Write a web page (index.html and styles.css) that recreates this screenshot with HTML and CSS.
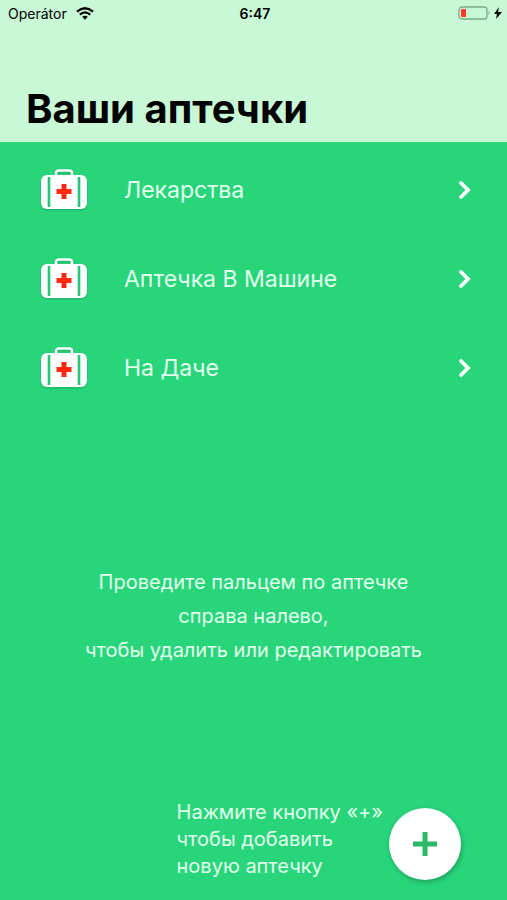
FILE: index.html
```html
<!DOCTYPE html>
<html lang="ru">
<head>
<meta charset="utf-8">
<meta name="viewport" content="width=device-width, initial-scale=1">
<title>Ваши аптечки</title>
<link rel="stylesheet" href="styles.css">
</head>
<body>
<svg class="symbols" aria-hidden="true">
  <symbol id="kit" viewBox="0 0 48 42">
    <path d="M16 7V4q0-2.500 3-2.500h10q3 0 3 2.500v3" fill="none" stroke="#fff" stroke-width="2.6"/>
    <rect x="1" y="6" width="46" height="34" rx="6" fill="#fff"/>
    <path d="M9 8v30M39 8v30" stroke="#28c775" stroke-width="2.600"/>
    <path d="M24 15v15M16.500 22.500h15" stroke="#ff2612" stroke-width="5"/>
  </symbol>
  <symbol id="chevron" viewBox="0 0 14 20">
    <path d="M3 3l7 7-7 7" fill="none" stroke="#fff" stroke-width="3.800" stroke-linecap="round"/>
  </symbol>
</svg>
<header class="header">
  <div class="status">
    <div class="carrier"><span>Operátor</span>
      <svg class="wifi" viewBox="0 0 18 13"><path d="M1 4.6q8-6.8 16 0M3.8 7.6q5.2-4.4 10.4 0" fill="none" stroke="#000" stroke-width="2.3"/><path d="M6.2 9.8q2.8-2.2 5.6 0L9 12.8z"/></svg>
    </div>
    <time class="clock">6:47</time>
    <div class="power">
      <svg class="battery" viewBox="0 0 44 14"><rect x="1" y="1" width="28" height="12" rx="3" fill="none" stroke="#7da98c" stroke-width="1.300"/><path d="M30.500 5q2 2 0 4z" fill="#6f9b80"/><rect x="3" y="3" width="5" height="8" rx="1" fill="#ff3b30"/><path d="M41 1l-5 7h3l-1 5 6-7h-4z"/></svg>
    </div>
  </div>
  <h1 class="title">Ваши аптечки</h1>
</header>
<main class="content">
  <nav class="kits">
    <a class="kit" href="#meds"><svg class="kit-icon"><use href="#kit"/></svg><span class="kit-name">Лекарства</span><svg class="chevron"><use href="#chevron"/></svg></a>
    <a class="kit" href="#car"><svg class="kit-icon"><use href="#kit"/></svg><span class="kit-name">Аптечка В Машине</span><svg class="chevron"><use href="#chevron"/></svg></a>
    <a class="kit" href="#dacha"><svg class="kit-icon"><use href="#kit"/></svg><span class="kit-name">На Даче</span><svg class="chevron"><use href="#chevron"/></svg></a>
  </nav>
  <p class="hint">Проведите пальцем по аптечке<br>справа налево,<br>чтобы удалить или редактировать</p>
  <footer class="footer">
    <p class="add-hint">Нажмите кнопку «+»<br>чтобы добавить<br>новую аптечку</p>
    <button class="add" type="button" aria-label="Добавить аптечку"><svg class="plus" viewBox="0 0 24 24"><path d="M12 0v24M0 12h24" stroke="#2bb968" stroke-width="5"/></svg></button>
  </footer>
</main>
</body>
</html>
```
FILE: styles.css
```css
* { box-sizing: border-box; }
body {
  margin: 0;
  min-height: 100vh;
  display: flex;
  flex-direction: column;
  background: #28d57b;
  font-family: Inter, "Liberation Sans", sans-serif;
}
h1, p { margin: 0; }
.symbols { position: absolute; width: 0; height: 0; }
.header { background: #c8f8d6; padding-bottom: 8px; }
.status {
  display: grid;
  grid-template-columns: 1fr auto 1fr;
  align-items: center;
  height: 26px;
  padding: 0 5px 0 8px;
  font-size: 14px;
}
.carrier { display: flex; align-items: center; gap: 9px; }
.wifi { width: 18px; height: 13px; }
.clock { font-weight: 600; }
.power { display: flex; justify-content: flex-end; }
.battery { width: 44px; height: 14px; }
.title { padding: 58px 26px 0; font-size: 40px; line-height: 50px; font-weight: 700; }
.content { flex: 1; display: flex; flex-direction: column; color: #e2ffed; }
.kit {
  display: flex;
  align-items: center;
  height: 89px;
  padding: 0 35px 0 40px;
  color: inherit;
  text-decoration: none;
}
.kits { padding-top: 3px; }
.kit-icon { width: 48px; height: 42px; filter: drop-shadow(0 1px 1px #0003); }
.kit-name { flex: 1; padding-left: 36px; font-size: 23px; }
.chevron { width: 14px; height: 20px; }
.hint { margin: auto 0; padding-top: 20px; text-align: center; font-size: 20px; line-height: 34px; }
.footer { display: flex; justify-content: flex-end; align-items: flex-end; gap: 6px; padding: 0 46px 20px; }
.add-hint { font-size: 20px; line-height: 27px; }
.add {
  display: grid;
  place-items: center;
  width: 72px;
  height: 72px;
  padding: 0;
  border: 0;
  border-radius: 50%;
  background: #fff;
  box-shadow: 1px 2px 5px #0004;
}
.plus { width: 24px; height: 24px; }
```
